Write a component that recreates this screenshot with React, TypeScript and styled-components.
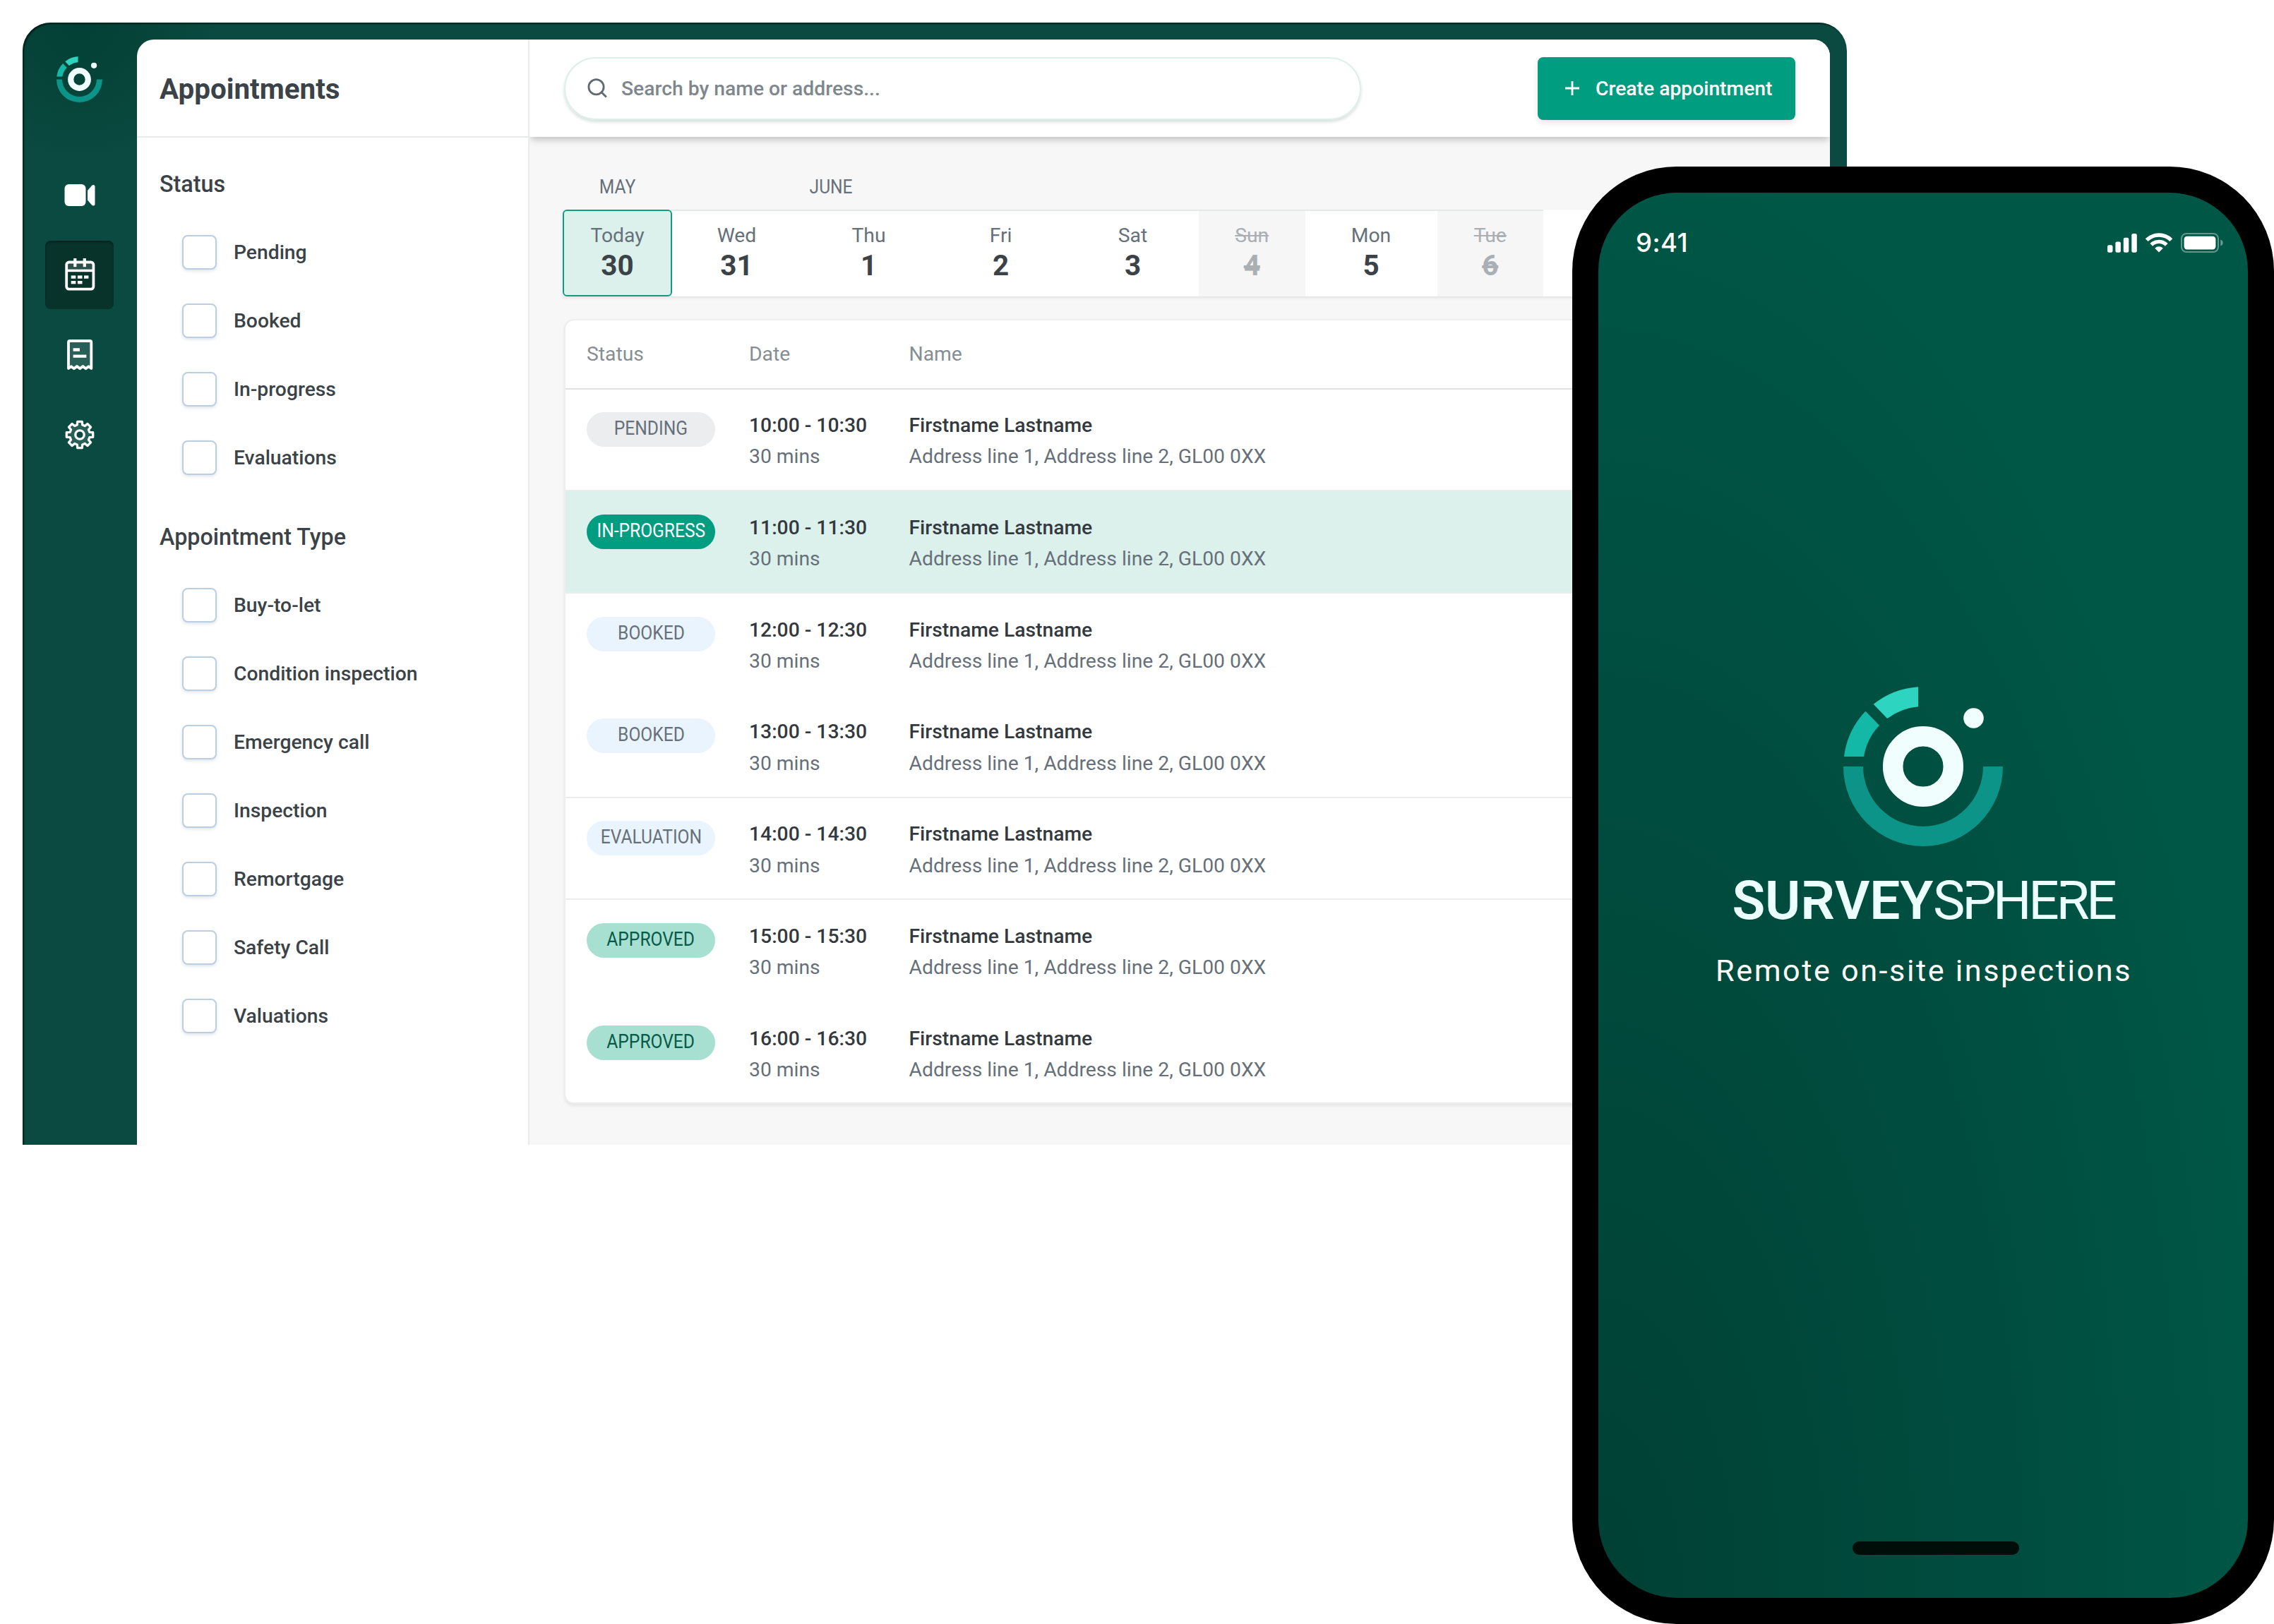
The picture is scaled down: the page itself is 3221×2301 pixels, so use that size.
import React from "react";
import styled, {createGlobalStyle} from "styled-components";

const GlobalStyle = createGlobalStyle`
  * {
    box-sizing: border-box;
  }

  body {
    margin: 0;
    background: #fff;
    font-family: Roboto, "Liberation Sans", sans-serif;
    font-size: 28.27px;
    color: #3b4349;
  }
`;

const Page = styled.div`
  position: relative;
  width: 3221px;
  height: 2301px;
  padding: 32px;
  overflow: hidden;
`;

/* ---------- desktop window ---------- */

const Window = styled.div`
  display: flex;
  width: 2584px;
  height: 1590px;
  padding: 24px 24px 0 0;
  border-radius: 40px 40px 0 0;
  background: radial-gradient(circle at 80px 0, #023f34 0, #0b4a40 200px);
  box-shadow: inset 2px 2px 2px rgba(0, 20, 15, 0.7);
`;

const Sidebar = styled.nav`
  display: flex;
  flex-direction: column;
  align-items: center;
  width: 162px;
  padding: 23.5px 1px 0 0;

  & > svg {
    margin-bottom: 83.5px;
  }
`;

const NavItem = styled.a<{ $active?: boolean }>`
  display: flex;
  align-items: center;
  justify-content: center;
  width: 97px;
  height: 97px;
  margin-bottom: 16px;
  border-radius: 8px;
  background: ${(p) => (p.$active ? "#07332b" : "transparent")};
  box-shadow: ${(p) => (p.$active ? "inset 0 2px 3px rgba(0, 0, 0, 0.35)" : "none")};
`;

const Panel = styled.div`
  display: flex;
  flex: 1;
  overflow: hidden;
  border-radius: 24px 24px 0 0;
  background: #fff;
`;

const Filters = styled.aside`
  width: 556px;
  border-right: 2px solid #e9ebeb;
`;

const FiltersTitle = styled.h1`
  display: flex;
  align-items: center;
  height: 139px;
  margin: 0;
  padding: 4px 0 0 32px;
  border-bottom: 2px solid #e9ebeb;
  font-size: 40.4px;
  font-weight: 700;
`;

const FilterGroup = styled.section`
  padding: 17px 32px 0;

  & + & {
    padding-top: 16px;
  }
`;

const FilterHeading = styled.h2`
  height: 96.9px;
  margin: 0;
  font-size: 32.3px;
  font-weight: 500;
  line-height: 99px;
`;

const FilterRow = styled.label`
  display: flex;
  align-items: center;
  gap: 24px;
  height: 96.9px;
  padding-left: 32px;
  font-weight: 500;
`;

const Checkbox = styled.span`
  width: 49px;
  height: 49px;
  border: 2px solid #bccfe2;
  border-radius: 8px;
  background: #fff;
  box-shadow: 0 2px 4px rgba(60, 90, 120, 0.16);
`;

const Main = styled.main`
  flex: 1;
  overflow: hidden;
  background: #f7f7f7;
`;

const TopBar = styled.header`
  display: flex;
  align-items: center;
  justify-content: space-between;
  height: 137.5px;
  padding: 1px 49px 0;
  background: #fff;
  box-shadow: 0 6px 9px -2px rgba(0, 0, 0, 0.22);
`;

const Search = styled.div`
  display: flex;
  align-items: center;
  gap: 20px;
  width: 1129px;
  height: 89px;
  padding-left: 31px;
  border: 2px solid #dcefe9;
  border-radius: 45px;
  color: #7e878d;
  font-weight: 500;
  box-shadow: 0 3px 4px rgba(20, 60, 50, 0.16);
`;

const CreateButton = styled.button`
  display: flex;
  align-items: center;
  gap: 22px;
  width: 365px;
  height: 89px;
  padding: 0 0 0 38px;
  border: 0;
  border-radius: 8px;
  background: #019d80;
  color: #fff;
  font: 500 28.27px Roboto, sans-serif;
  box-shadow: 0 4px 10px rgba(0, 0, 0, 0.1);
`;

const Content = styled.div`
  padding: 49px 49px 0 47px;
`;

const Months = styled.div`
  display: flex;
  height: 54px;
  line-height: 44px;
  color: #66707a;
`;

const Month = styled.div<{ $width: number }>`
  width: ${(p) => p.$width}px;
  text-align: center;
`;

/* narrow caps used for months and status labels */
const Condensed = styled.span`
  display: inline-block;
  transform: scaleX(0.87);
`;

const Days = styled.div`
  display: flex;
  height: 123px;
  box-shadow: 0 2px 4px rgba(0, 0, 0, 0.09);
`;

const Day = styled.div<{ $today?: boolean; $off?: boolean }>`
  flex: none;
  z-index: ${(p) => (p.$today ? 1 : 0)};
  width: ${(p) => (p.$today ? 155 : p.$off ? 150.5 : 187)}px;
  padding-top: ${(p) => (p.$today ? 17 : 17)}px;
  border: ${(p) => (p.$today ? "2px solid #159a80" : "0 solid #e3eae8")};
  border-top-width: 2px;
  border-radius: ${(p) => (p.$today ? 6 : 0)}px;
  background: ${(p) => (p.$today ? "#ddf1ec" : p.$off ? "#f6f6f7" : "#fff")};
  color: ${(p) => (p.$off ? "#a9afb3" : "#66707a")};
  text-align: center;
  text-decoration: ${(p) => (p.$off ? "line-through" : "none")};
  line-height: 36px;

  & b {
    display: block;
    color: ${(p) => (p.$off ? "#a9afb3" : "#3b4349")};
    font-size: 40.4px;
    font-weight: 700;
    line-height: 50px;
  }
`;

const DayStrip = styled.div`
  display: flex;
  flex: 1;
  overflow: hidden;
  margin-left: -2px;
  background: #fff;
`;

const Table = styled.div`
  overflow: hidden;
  margin: 32px 0 0 2px;
  border: 2px solid #eeeeef;
  border-radius: 14px;
  background: #fff;
  box-shadow: 0 3px 4px rgba(0, 0, 0, 0.07);
`;

const HeadRow = styled.div`
  display: grid;
  grid-template-columns: 230px 226.5px 1fr;
  height: 98px;
  padding-left: 30px;
  border-bottom: 2px solid #dfe1e2;
  color: #868e94;
  line-height: 96px;
`;

const Row = styled.div<{ $active?: boolean; $line?: boolean }>`
  display: grid;
  grid-template-columns: 230px 226.5px 1fr;
  height: 144.8px;
  padding: 29.5px 0 0 30px;
  border-bottom: 2px solid ${(p) => (p.$line ? "#ececed" : "transparent")};
  background: ${(p) => (p.$active ? "#ddf1ec" : "#fff")};
  line-height: 44.4px;
  color: #66707a;

  &:last-child {
    height: 142px;
  }

  & strong {
    display: block;
    color: #33393f;
    font-weight: 500;
  }
`;

const pills = {
  PENDING: {background: "#ecedee", color: "#66707a"},
  "IN-PROGRESS": {background: "#019d80", color: "#fff"},
  BOOKED: {background: "#eaf4fe", color: "#66707a"},
  EVALUATION: {background: "#eaf4fe", color: "#66707a"},
  APPROVED: {background: "#a7e0d1", color: "#055a48"},
};

type Status = keyof typeof pills;

const Pill = styled.div<{ $status: Status }>`
  display: flex;
  justify-content: center;
  width: 182px;
  height: 49px;
  margin-top: 3px;
  border-radius: 25px;
  background: ${(p) => pills[p.$status].background};
  color: ${(p) => pills[p.$status].color};
  line-height: 46px;
`;

/* ---------- phone ---------- */

const Phone = styled.div`
  position: absolute;
  left: 2227px;
  top: 236px;
  width: 994px;
  height: 2065px;
  padding: 37px;
  border-radius: 148px;
  background: #000;
`;

const Screen = styled.div`
  display: flex;
  flex-direction: column;
  align-items: center;
  width: 920px;
  height: 1991px;
  border-radius: 111px;
  background: radial-gradient(ellipse 100% 100% at 0 100%, #004034 0, #004f40 72%, #005746 105%);
`;

const StatusBar = styled.div`
  display: flex;
  align-items: center;
  gap: 12px;
  width: 100%;
  height: 28px;
  margin-top: 56.5px;
  padding: 0 35px 0 53px;
  color: #fff;
  font-family: Inter, sans-serif;
  font-size: 36.5px;
  font-weight: 500;
  letter-spacing: 0.5px;

  & span {
    flex: 1;
    padding-top: 1px;
  }
`;

const Brand = styled.div`
  display: flex;
  flex-direction: column;
  align-items: center;
  margin: 615px 0 0;
  color: #edfffc;
`;

const Wordmark = styled.div`
  display: flex;
  margin-top: 32px;
  font-family: Roboto, sans-serif;
  font-size: 76.6px;
  line-height: 90px;
`;

const Word = styled.span<{ $weight: number; $track: number }>`
  font-weight: ${(p) => p.$weight};
  letter-spacing: ${(p) => p.$track}px;
`;

/* stencil notch in the stem of R and P */
const Cut = styled.span`
  position: relative;

  &::after {
    content: "";
    position: absolute;
    left: 1px;
    top: 25px;
    width: 16px;
    height: 15px;
    background: #004f40;
  }
`;

const Tagline = styled.p`
  margin: 30px 0 0 2px;
  color: #fff;
  font-size: 43.2px;
  line-height: 50px;
  letter-spacing: 2.6px;
`;

const HomeBar = styled.div`
  width: 236px;
  height: 19px;
  margin: auto 0 61px 35px;
  border-radius: 10px;
  background: #000e0a;
`;

/* ---------- drawings ---------- */

const LogoMark = ({size}: { size: number }) => (
  <svg width={size} height={size} viewBox="-113 -113 226 226">
    <path fill="#0d9488" d="M-113 0A113 113 0 0 0 113 0H85A85 85 0 0 1 -85 0Z" />
    <path fill="#14b8a6" d="M-112 -14A113 113 0 0 1 -81.6 -78.3L-62 -58.3A85 85 0 0 0 -84 -14Z" />
    <path fill="#2dd4bf" d="M-70.3 -88.2A113 113 0 0 1 -7 -112.8V-84.7A85 85 0 0 0 -50.8 -67.9Z" />
    <circle r="42.8" fill="none" stroke="#f0fffd" strokeWidth="28.5" />
    <circle cx="71.5" cy="-68.5" r="14.3" fill="#f0fffd" />
  </svg>
);

const VideoIcon = () => (
  <svg width="48" height="48" viewBox="0 0 48 48" fill="#fff">
    <rect x="2.5" y="8" width="30" height="31" rx="6" />
    <path d="M35 17L41 10Q42 9 43.5 9Q45.5 9 45.5 11.5V36Q45.5 38.500 43.500 38.500Q42 38.500 41 37.500L35 30.500Z" />
  </svg>
);

const CalendarIcon = () => (
  <svg width="48" height="48" viewBox="0 0 48 48" fill="#fff">
    <rect x="5.2" y="5.5" width="38.2" height="38.1" rx="3.5" fill="none" stroke="#fff" strokeWidth="3.8" />
    <rect x="7" y="7.4" width="34.5" height="8.2" fillOpacity="0.15" />
    <rect x="5" y="15.6" width="38.5" height="3.6" />
    <rect x="15.2" y="0" width="4.2" height="12.2" />
    <rect x="28.7" y="0" width="4.2" height="12.2" />
    <rect x="11.7" y="24.4" width="6.6" height="4.3" />
    <rect x="20.9" y="24.4" width="6.6" height="4.3" />
    <rect x="30" y="24.4" width="6.4" height="4.3" />
    <rect x="11.7" y="32" width="6.6" height="4.3" />
    <rect x="20.9" y="32" width="6.6" height="4.3" />
  </svg>
);

const ReceiptIcon = () => (
  <svg width="48" height="48" viewBox="0 0 48 48" fill="#fff">
    <path
      d="M8 43V6Q8 4 10 4H38.3Q40.3 4 40.3 6V43L36.5 40.3L32.5 43.3L28.4 40L24.2 43.3L20 40L15.8 43.3L11.8 40.3Z"
      fillOpacity="0.12"
      stroke="#fff"
      strokeWidth="3.8"
      strokeLinejoin="round"
    />
    <rect x="14.6" y="14.3" width="9.4" height="4.4" />
    <rect x="14.6" y="23.6" width="18.7" height="4.2" />
  </svg>
);

const point = (deg: number, r: number) => {
  const a = (deg * Math.PI) / 180;
  return `${(24 + r * Math.sin(a)).toFixed(2)} ${(24 - r * Math.cos(a)).toFixed(2)}`;
};

// eight teeth, every 45 degrees
const gearPath = "M" + [0, 45, 90, 135, 180, 225, 270, 315]
  .map((d) => [point(d - 15, 14.4), point(d - 10, 19), point(d + 10, 19), point(d + 15, 14.4)].join("L"))
  .join("L") + "Z";

const GearIcon = () => (
  <svg width="48" height="48" viewBox="0 0 48 48" stroke="#fff" strokeWidth="3.3" strokeLinejoin="round">
    <path d={gearPath} fill="#fff" fillOpacity="0.12" />
    <circle cx="24" cy="24" r="6.2" fill="#0b4a40" />
  </svg>
);

const SearchIcon = () => (
  <svg width="28" height="28" viewBox="0 0 28 28" fill="none" stroke="#5f6a72" strokeWidth="2.8">
    <circle cx="12.5" cy="12.2" r="10.6" />
    <path d="M19.8 19.6L26.8 26.6" />
  </svg>
);

const PlusIcon = () => (
  <svg width="22" height="22" viewBox="0 0 22 22" stroke="#fff" strokeWidth="2.8">
    <path d="M11 1V21M1 11H21" />
  </svg>
);

const SignalIcon = () => (
  <svg width="42" height="28" viewBox="0 0 42 28" fill="#fff">
    <rect x="0" y="17.3" width="7.5" height="10.4" rx="2.2" />
    <rect x="11.4" y="12.4" width="7.5" height="15.3" rx="2.2" />
    <rect x="22.8" y="6.8" width="7.5" height="20.9" rx="2.2" />
    <rect x="34.3" y="1" width="7.5" height="26.7" rx="2.2" />
  </svg>
);

const WifiIcon = () => (
  <svg width="38" height="28" viewBox="0 0 38 28" fill="none" stroke="#fff" strokeWidth="5.4">
    <path d="M1.7 10.2A24.5 24.5 0 0 1 36.3 10.2" />
    <path d="M8.3 16.8A15.2 15.2 0 0 1 29.7 16.8" />
    <path d="M19 27.5L13.2 21.7A8.2 8.2 0 0 1 24.8 21.7Z" fill="#fff" stroke="none" />
  </svg>
);

const BatteryIcon = () => (
  <svg width="60" height="28" viewBox="0 0 60 28" fill="#fff">
    <rect x="1" y="1" width="52" height="26" rx="7" fill="none" stroke="#fff" strokeOpacity="0.38" strokeWidth="2" />
    <rect x="4.6" y="4.7" width="44.8" height="18.8" rx="4.2" />
    <path d="M56.3 9.5Q59.6 11 59.6 14Q59.6 17 56.3 18.5Z" fillOpacity="0.42" />
  </svg>
);

/* ---------- data ---------- */

const filters = [
  {title: "Status", items: ["Pending", "Booked", "In-progress", "Evaluations"]},
  {
    title: "Appointment Type",
    items: [
      "Buy-to-let",
      "Condition inspection",
      "Emergency call",
      "Inspection",
      "Remortgage",
      "Safety Call",
      "Valuations",
    ],
  },
];

const days = [
  {name: "Wed", date: 31},
  {name: "Thu", date: 1},
  {name: "Fri", date: 2},
  {name: "Sat", date: 3},
  {name: "Sun", date: 4, off: true},
  {name: "Mon", date: 5},
  {name: "Tue", date: 6, off: true},
];

const appointments: { status: Status; time: string; line?: boolean }[] = [
  {status: "PENDING", time: "10:00 - 10:30", line: true},
  {status: "IN-PROGRESS", time: "11:00 - 11:30", line: true},
  {status: "BOOKED", time: "12:00 - 12:30"},
  {status: "BOOKED", time: "13:00 - 13:30", line: true},
  {status: "EVALUATION", time: "14:00 - 14:30", line: true},
  {status: "APPROVED", time: "15:00 - 15:30"},
  {status: "APPROVED", time: "16:00 - 16:30"},
];

const AppointmentTable: React.FC = () => (
  <Table>
    <HeadRow>
      <span>Status</span>
      <span>Date</span>
      <span>Name</span>
    </HeadRow>
    {appointments.map((item) => (
      <Row key={item.time} $active={item.status === "IN-PROGRESS"} $line={item.line}>
        <Pill $status={item.status}>
          <Condensed>{item.status}</Condensed>
        </Pill>
        <div>
          <strong>{item.time}</strong>
          30 mins
        </div>
        <div>
          <strong>Firstname Lastname</strong>
          Address line 1, Address line 2, GL00 0XX
        </div>
      </Row>
    ))}
  </Table>
);

const Desktop: React.FC = () => (
  <Window>
    <Sidebar>
      <LogoMark size={65} />
      <NavItem><VideoIcon /></NavItem>
      <NavItem $active><CalendarIcon /></NavItem>
      <NavItem><ReceiptIcon /></NavItem>
      <NavItem><GearIcon /></NavItem>
    </Sidebar>
    <Panel>
      <Filters>
        <FiltersTitle>Appointments</FiltersTitle>
        {filters.map((group) => (
          <FilterGroup key={group.title}>
            <FilterHeading>{group.title}</FilterHeading>
            {group.items.map((item) => (
              <FilterRow key={item}>
                <Checkbox />
                {item}
              </FilterRow>
            ))}
          </FilterGroup>
        ))}
      </Filters>
      <Main>
        <TopBar>
          <Search>
            <SearchIcon />
            Search by name or address...
          </Search>
          <CreateButton>
            <PlusIcon />
            Create appointment
          </CreateButton>
        </TopBar>
        <Content>
          <Months>
            <Month $width={155}><Condensed>MAY</Condensed></Month>
            <Month $width={450}><Condensed>JUNE</Condensed></Month>
          </Months>
          <Days>
            <Day $today>
              Today
              <b>30</b>
            </Day>
            <DayStrip>
              {days.map((day) => (
                <Day key={day.name} $off={day.off}>
                  {day.name}
                  <b>{day.date}</b>
                </Day>
              ))}
            </DayStrip>
          </Days>
          <AppointmentTable />
        </Content>
      </Main>
    </Panel>
  </Window>
);

const PhoneMockup: React.FC = () => (
  <Phone>
    <Screen>
      <StatusBar>
        <span>9:41</span>
        <SignalIcon />
        <WifiIcon />
        <BatteryIcon />
      </StatusBar>
      <Brand>
        <LogoMark size={226} />
        <Wordmark>
          <Word $weight={600} $track={-0.2}>SU<Cut>R</Cut>VEY</Word>
          <Word $weight={400} $track={-4.4}>S<Cut>P</Cut>HE<Cut>R</Cut>E</Word>
        </Wordmark>
        <Tagline>Remote on-site inspections</Tagline>
      </Brand>
      <HomeBar />
    </Screen>
  </Phone>
);

const App: React.FC = () => {
  return (
    <>
      <GlobalStyle />
      <Page>
        <Desktop />
        <PhoneMockup />
      </Page>
    </>
  )
};

export default App;
